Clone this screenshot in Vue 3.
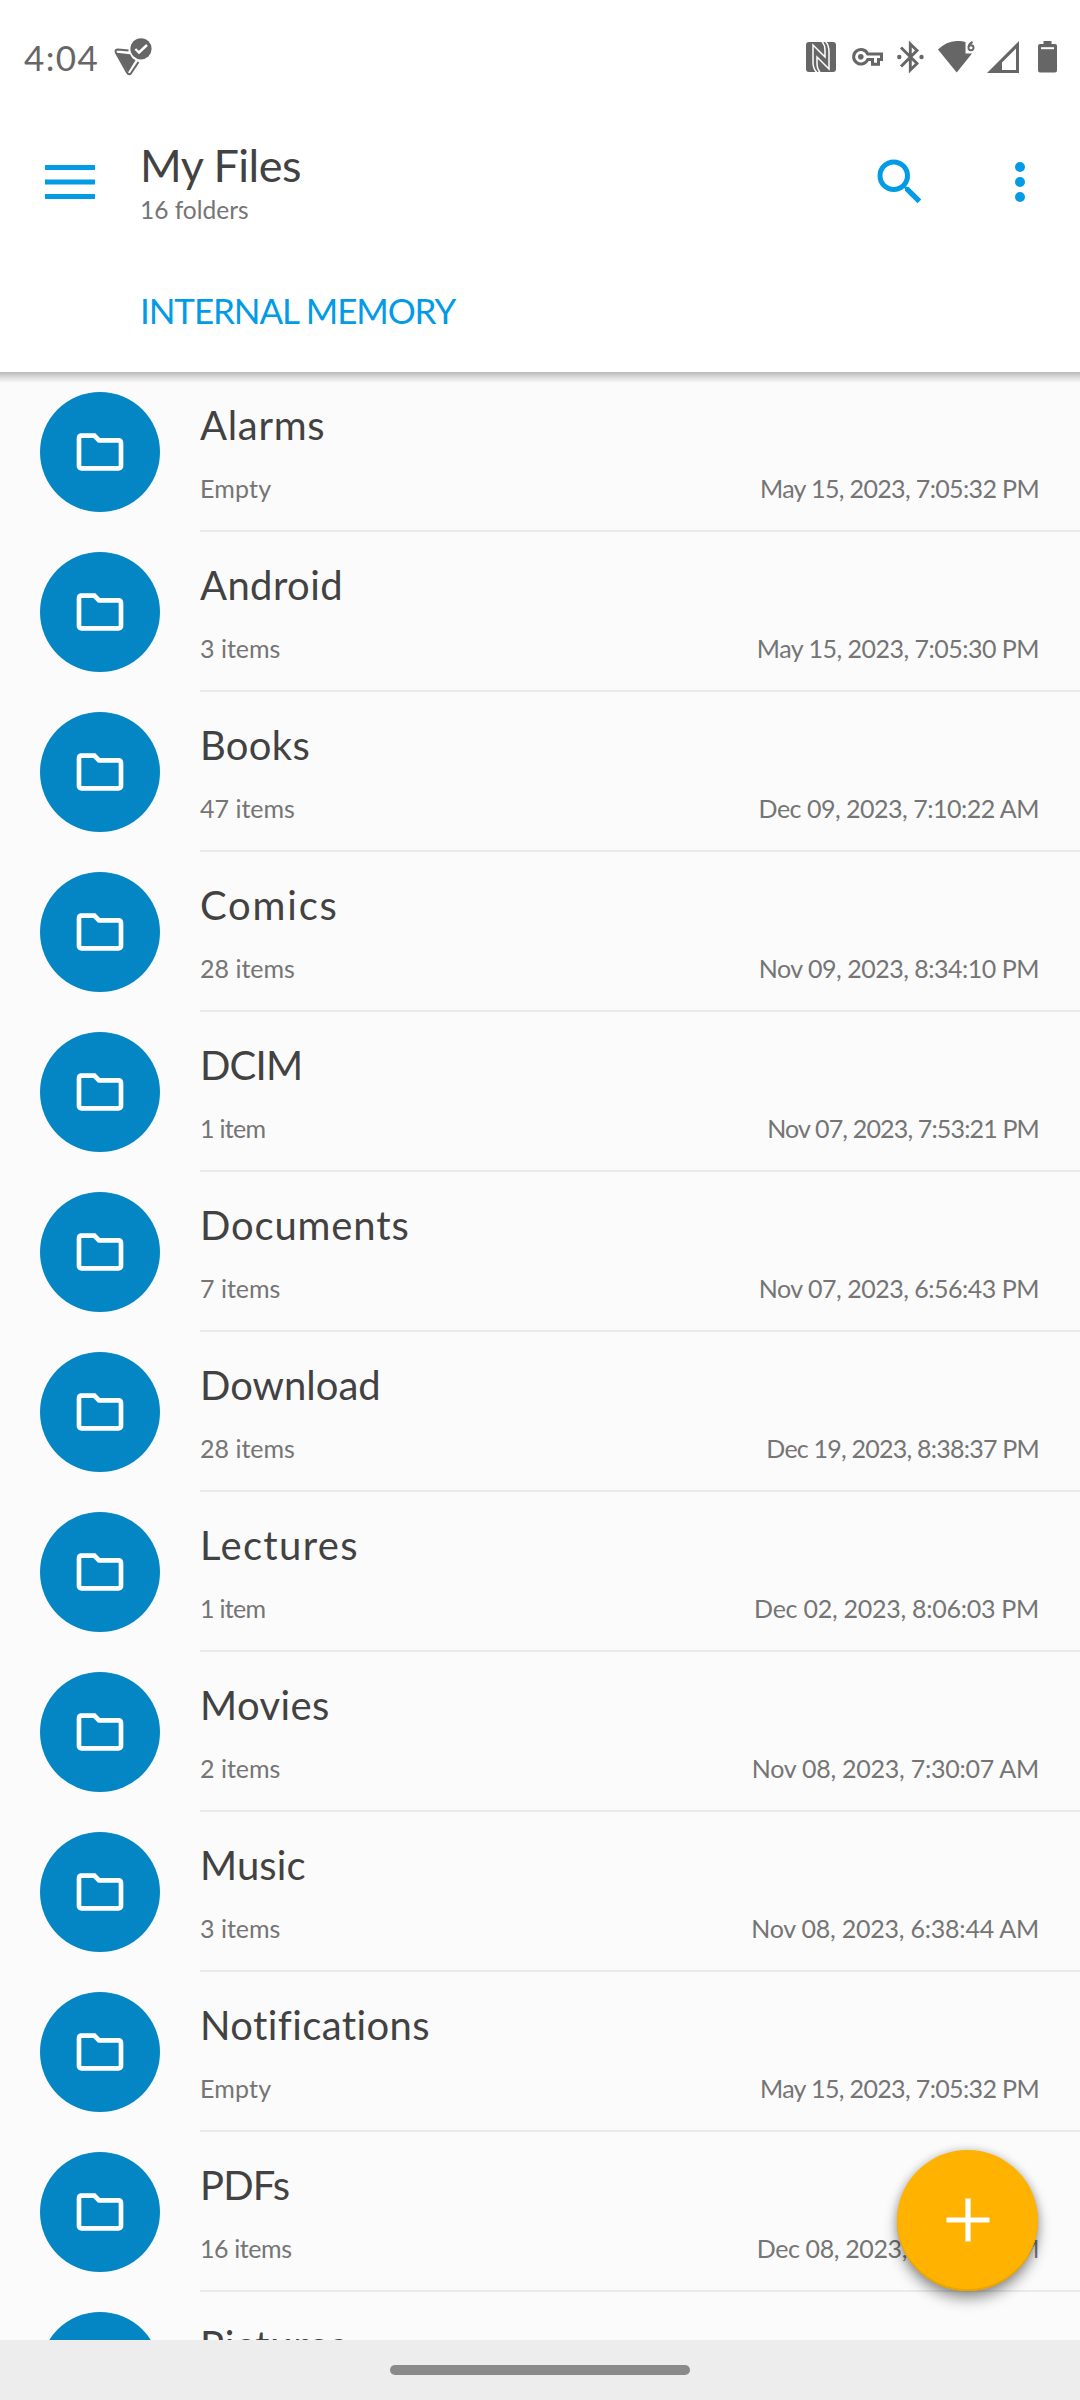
<script setup>
// name and date tracking are in px
const folders = [
  { name: 'Alarms', count: 'Empty', date: 'May 15, 2023, 7:05:32 PM', nameTrack: 0.7, dateTrack: -0.64, countTrack: 0.2 },
  { name: 'Android', count: '3 items', date: 'May 15, 2023, 7:05:30 PM', nameTrack: 0.4, dateTrack: -0.51 },
  { name: 'Books', count: '47 items', date: 'Dec 09, 2023, 7:10:22 AM', nameTrack: 0.3, dateTrack: -0.49 },
  { name: 'Comics', count: '28 items', date: 'Nov 09, 2023, 8:34:10 PM', nameTrack: 1.8, dateTrack: -0.49 },
  { name: 'DCIM', count: '1 item', date: 'Nov 07, 2023, 7:53:21 PM', nameTrack: -0.8, dateTrack: -0.84, countTrack: -0.7 },
  { name: 'Documents', count: '7 items', date: 'Nov 07, 2023, 6:56:43 PM', nameTrack: 0.85, dateTrack: -0.49 },
  { name: 'Download', count: '28 items', date: 'Dec 19, 2023, 8:38:37 PM', nameTrack: 0, dateTrack: -0.77 },
  { name: 'Lectures', count: '1 item', date: 'Dec 02, 2023, 8:06:03 PM', nameTrack: 1.35, dateTrack: -0.26, countTrack: -0.7 },
  { name: 'Movies', count: '2 items', date: 'Nov 08, 2023, 7:30:07 AM', nameTrack: 0.4, dateTrack: -0.24 },
  { name: 'Music', count: '3 items', date: 'Nov 08, 2023, 6:38:44 AM', nameTrack: 0.1, dateTrack: -0.22 },
  { name: 'Notifications', count: 'Empty', date: 'May 15, 2023, 7:05:32 PM', nameTrack: 0.4, dateTrack: -0.64, countTrack: 0.2 },
  { name: 'PDFs', count: '16 items', date: 'Dec 08, 2023, 7:05:32 PM', nameTrack: -0.8, dateTrack: -0.37, countTrack: -0.4 },
  { name: 'Pictures', count: '', date: '', nameTrack: 0.8, dateTrack: 0 },
]
const track = (px) => ({ letterSpacing: `${px || 0}px` })
</script>

<template>
  <div class="screen">
    <header class="header">
      <div class="status">
        <span class="clock">4:04</span>
        <svg class="notice" width="38" height="38" viewBox="0 0 38 38">
          <path d="M14.500 12.600 L4 11.400 Q.8 11.400 1.800 14.500 L13 34.500 Q15 38 17.300 34.800 L24.500 24" fill="none" stroke="#666" stroke-width="2" stroke-linejoin="round" />
          <path d="M2.500 14.800 L16 16.200 Q17.500 20 21.500 22.300 L14 34.500 Z" fill="#666" />
          <circle cx="27" cy="10.800" r="10.600" fill="#666" />
          <path d="M21.300 11 L25 14.500 L33 7" fill="none" stroke="#fff" stroke-width="2.400" />
        </svg>
        <div class="indicators">
          <svg width="30" height="30" viewBox="0 0 30 30">
            <rect width="30" height="30" rx="3" fill="#666" />
            <path d="M11 30.500 Q7 27 7 20 V3 L19 15 V8 Q19 3 16 -.5 M19.500 -.5 Q23 3 23 10 V27 L11 15 V22 Q11 27 14 30.500" fill="none" stroke="#fff" stroke-width="1.500" />
          </svg>
          <svg class="key" width="31" height="20" viewBox="0 0 31 20">
            <path d="M15.700 7 A7.300 7.300 0 1 0 15.700 12.500 H20.500 V17.300 H26.500 V12.500 H29.500 V7 Z" fill="none" stroke="#666" stroke-width="3" />
            <circle cx="8.800" cy="9.800" r="2.800" fill="#666" />
          </svg>
          <svg class="bt" width="27" height="32" viewBox="0 0 27 32">
            <path d="M4 6.500 L20 22.500 L13.300 29 V3 L20 9.500 L4 25.500" fill="none" stroke="#666" stroke-width="2.900" />
            <circle cx="2.300" cy="16" r="2.200" fill="#666" /><circle cx="24.500" cy="16" r="2.200" fill="#666" />
          </svg>
          <svg class="wifi" width="37" height="32" viewBox="0 0 37 32">
            <path d="M0 8.500 Q12 -3 27.500 1 V12.500 H34 L18.700 31.500 Z" fill="#666" />
            <path d="M34.600 1 Q31 2.400 30.600 6" fill="none" stroke="#666" stroke-width="1.900" />
            <circle cx="33" cy="6.800" r="2.500" fill="none" stroke="#666" stroke-width="1.900" />
          </svg>
          <svg class="signal" width="32" height="32" viewBox="0 0 32 32">
            <path fill-rule="evenodd" d="M0 32 L32 0 V32 Z M15 29 H29 V7.500 L15 21.500 Z" fill="#666" />
          </svg>
          <svg class="battery" width="19" height="32" viewBox="0 0 19 32">
            <path d="M5.500 0 H13.500 V3 H17 Q19 3 19 5 V29.500 Q19 31.500 17 31.500 H2 Q0 31.500 0 29.500 V5 Q0 3 2 3 H5.500 Z" fill="#666" />
            <path d="M3 7.200 H16" stroke="#fff" stroke-width="2" />
          </svg>
        </div>
      </div>
      <div class="appbar">
        <svg class="menu" width="50" height="34" viewBox="0 0 50 34"><path d="M0 2.500 H50 M0 17 H50 M0 31.500 H50" stroke="#039be5" stroke-width="5" /></svg>
        <div class="titles">
          <h1>My Files</h1>
          <p>16 folders</p>
        </div>
        <svg class="search" width="60" height="60" viewBox="0 0 24 24" fill="#039be5"><path d="M15.500 14h-.79l-.28-.27A6.471 6.471 0 0 0 16 9.500 6.500 6.500 0 1 0 9.500 16c1.610 0 3.090-.59 4.230-1.570l.27.28v.79l5 4.990L20.490 19l-4.990-5zm-6 0C7.010 14 5 11.990 5 9.500S7.010 5 9.500 5 14 7.010 14 9.500 11.990 14 9.500 14z" /></svg>
        <svg class="more" width="60" height="60" viewBox="0 0 24 24" fill="#039be5"><circle cx="12" cy="6" r="2" /><circle cx="12" cy="12" r="2" /><circle cx="12" cy="18" r="2" /></svg>
      </div>
      <nav class="crumb">INTERNAL MEMORY</nav>
    </header>

    <main class="list">
      <article v-for="f in folders" :key="f.name" class="row">
        <div class="avatar">
          <svg width="56" height="56" viewBox="0 0 24 24" fill="#fff"><path d="M9.170 6l2 2H20v10H4V6h5.170M10 4H4c-1.100 0-1.990.9-1.990 2L2 18c0 1.100.9 2 2 2h16c1.100 0 2-.9 2-2V8c0-1.100-.9-2-2-2h-8l-2-2z" /></svg>
        </div>
        <div class="info">
          <h2 :style="track(f.nameTrack)">{{ f.name }}</h2>
          <div class="meta">
            <span :style="track(f.countTrack)">{{ f.count }}</span>
            <time :style="track(f.dateTrack)">{{ f.date }}</time>
          </div>
        </div>
      </article>
      <button class="fab" aria-label="Add">
        <svg width="44" height="44" viewBox="0 0 44 44"><path d="M22 .5 V43.500 M.5 22 H43.500" stroke="#fff" stroke-width="5.200" /></svg>
      </button>
    </main>

    <footer class="navbar"><div class="pill"></div></footer>
  </div>
</template>

<style>
body { margin: 0; background: #fff; }
</style>

<style scoped>
.screen { width: 1080px; height: 2400px; display: flex; flex-direction: column; overflow: hidden; background: #fbfbfb; font-family: Lato, "Open Sans", sans-serif; color: #424242; }
h1, h2, p { margin: 0; font-weight: 400; }
svg { display: block; flex: none; }
.header { height: 372px; flex: none; display: flex; flex-direction: column; background: #fff; position: relative; z-index: 1; }
.header::after { content: ""; position: absolute; left: 0; right: 0; top: 100%; height: 11px; background: linear-gradient(#b9b9b9, #dadada 45%, #fbfbfb); }
.status { height: 114px; box-sizing: border-box; padding: 0 23px 0 24px; display: flex; align-items: center; color: #666; }
.clock { width: 90px; font-size: 35px; line-height: 42px; letter-spacing: 1.4px; }
.indicators { margin-left: auto; display: flex; align-items: center; }
.key { margin-left: 16px; }
.bt { margin-left: 14px; }
.wifi { margin-left: 14px; }
.signal { margin-left: 12px; }
.battery { margin-left: 19px; }
.appbar { height: 140px; margin-bottom: -4px; padding: 0 30px 0 45px; display: flex; align-items: center; }
.search, .more, .menu { margin-bottom: 4px; }
.titles { margin-left: 45px; flex: 1; padding-bottom: 5px; }
h1 { font-size: 45px; line-height: 54px; letter-spacing: -0.5px; }
.titles p { margin-top: 2px; font-size: 24.500px; line-height: 32px; color: #757575; }
.more { margin-left: 60px; }
.crumb { padding-left: 140px; font-size: 35px; line-height: 120px; letter-spacing: -1.100px; color: #039be5; }
.list { flex: 1; min-height: 0; overflow: hidden; position: relative; }
.row { height: 160px; display: flex; padding-left: 40px; }
.avatar { width: 120px; height: 120px; margin-top: 20px; border-radius: 50%; background: #0486c5; display: flex; align-items: center; justify-content: center; flex: none; }
.info { flex: 1; margin-left: 40px; box-sizing: border-box; height: 160px; padding: 29px 41px 0 0; border-bottom: 2px solid #eaeaea; }
h2 { font-size: 40px; line-height: 48px; }
.meta { display: flex; justify-content: space-between; margin-top: 22px; font-size: 25px; line-height: 34px; color: #757575; }
.fab { position: absolute; left: 897px; bottom: 49.500px; width: 141px; height: 141px; padding: 0; border: 0; border-radius: 50%; background: #ffb300; box-shadow: inset 0 -2px 0 #e9a400, 0 8px 14px rgba(0,0,0,.38), 0 0 8px rgba(0,0,0,.18); display: flex; align-items: center; justify-content: center; }
.navbar { height: 60px; flex: none; background: #ededed; display: flex; align-items: center; justify-content: center; }
.pill { width: 300px; height: 10px; border-radius: 5px; background: #8a8a8a; }
</style>
